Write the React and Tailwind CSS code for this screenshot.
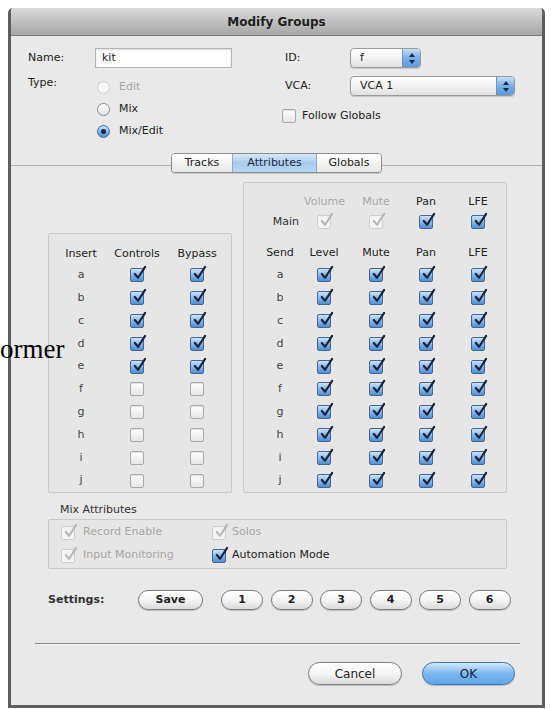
const FONT = { fontFamily: '"DejaVu Sans", "Liberation Sans", sans-serif' };

const INSERTS = ["a", "b", "c", "d", "e", "f", "g", "h", "i", "j"];
const SEND_COLS = [
  "w-[40px] ml-[16px]",
  "w-[40px] ml-[4px]",
  "w-[40px] ml-[12px]",
  "w-[40px] ml-[10px]",
  "w-[40px] ml-[12px]",
];

function Tick({ color }) {
  return (
    <svg
      viewBox="0 0 16 16"
      className="absolute left-[1px] -top-[3px] w-[15px] h-[15px] overflow-visible"
    >
      <path
        d="M3 8.5 L6.5 12.5 L14 1"
        fill="none"
        stroke={color}
        strokeWidth="2.3"
        strokeLinecap="round"
        strokeLinejoin="round"
      />
    </svg>
  );
}

function Check({ on = true, dim = false }) {
  if (!on) {
    return (
      <span className="inline-block w-[14px] h-[14px] rounded-[2px] border border-[#ababab] bg-gradient-to-b from-[#ffffff] to-[#e6e6e6] shadow-[inset_0_1px_1px_rgba(0,0,0,0.12)]" />
    );
  }
  if (dim) {
    return (
      <span className="relative inline-block w-[14px] h-[14px] rounded-[2px] border border-[#cfcfcf] bg-[#f3f3f3]">
        <Tick color="#b9b9b9" />
      </span>
    );
  }
  return (
    <span className="relative inline-block w-[14px] h-[14px] rounded-[2px] border border-[#41679a] bg-gradient-to-b from-[#cde3f9] via-[#86b6e8] to-[#4f8fd2]">
      <Tick color="#16233d" />
    </span>
  );
}

function Radio({ on = false, dim = false }) {
  if (on) {
    return (
      <span className="flex items-center justify-center w-[13px] h-[13px] rounded-full border border-[#3f6c9f] bg-gradient-to-b from-[#cde3f9] via-[#86b6e8] to-[#4f8fd2]">
        <span className="w-[5px] h-[5px] rounded-full bg-[#1b2a45]" />
      </span>
    );
  }
  return (
    <span
      className={
        dim
          ? "w-[13px] h-[13px] rounded-full border border-[#cdcdcd] bg-[#f5f5f5]"
          : "w-[13px] h-[13px] rounded-full border border-[#8f8f8f] bg-gradient-to-b from-white to-[#e2e2e2]"
      }
    />
  );
}

function Popup({ label, width }) {
  return (
    <div
      className={`flex h-[20px] ${width} rounded-[4px] border border-[#9a9a9a] bg-gradient-to-b from-white via-[#f3f3f3] to-[#e0e0e0] shadow-[0_1px_1px_rgba(0,0,0,0.15)] overflow-hidden`}
    >
      <span className="flex-1 pl-[9px] leading-[18px] text-[#222]">{label}</span>
      <span className="flex flex-col items-center justify-center gap-[3px] w-[18px] bg-gradient-to-b from-[#c6def7] via-[#79aee6] to-[#5d9ade] border-l border-[#6d94c0]">
        <svg viewBox="0 0 6 4" className="w-[6px] h-[4px]">
          <path d="M0 4 L3 0 L6 4 Z" fill="#1c2c48" />
        </svg>
        <svg viewBox="0 0 6 4" className="w-[6px] h-[4px]">
          <path d="M0 0 L3 4 L6 0 Z" fill="#1c2c48" />
        </svg>
      </span>
    </div>
  );
}

function Pill({ children, className = "" }) {
  return (
    <button
      className={`flex items-center justify-center rounded-full border border-[#7f7f7f] bg-gradient-to-b from-white via-[#f5f5f5] to-[#dadada] shadow-[0_1px_1px_rgba(0,0,0,0.2)] text-[#222] ${className}`}
    >
      {children}
    </button>
  );
}

export default function App() {
  return (
    <div
      className="relative w-[551px] h-[709px] bg-white overflow-hidden text-[11px]"
      style={FONT}
    >
      <div className="ml-[8px] mt-[8px] w-[537px] h-[700px] flex flex-col rounded-t-[5px] border-x-[3px] border-b-[3px] border-[#5e5e5e] bg-[#e9e9e9] overflow-hidden">
        {/* title bar */}
        <div className="h-[28px] flex items-center justify-center bg-gradient-to-b from-[#dadada] to-[#a7a7a7] border-b border-[#7c7c7c] text-[12px] font-bold text-[#1f1f1f]">
          Modify Groups
        </div>

        {/* top fields */}
        <div className="h-[116px] flex pt-[12px]">
          <div className="w-[271px] pl-[17px]">
            <div className="flex items-center h-[20px]">
              <span className="w-[67px] text-[#222]">Name:</span>
              <div className="w-[137px] h-[20px] bg-white border border-[#b4b4b4] shadow-[inset_0_1px_2px_rgba(0,0,0,0.15)] pl-[6px] leading-[18px] text-[#222]">
                kit
              </div>
            </div>
            <div className="flex mt-[8px]">
              <span className="w-[67px] leading-[14px] text-[#222]">Type:</span>
              <div className="flex flex-col">
                <div className="flex items-center gap-[9px] h-[22px] ml-[2px]">
                  <Radio dim />
                  <span className="text-[#a5a5a5]">Edit</span>
                </div>
                <div className="flex items-center gap-[9px] h-[22px] ml-[2px]">
                  <Radio />
                  <span className="text-[#222]">Mix</span>
                </div>
                <div className="flex items-center gap-[9px] h-[22px] ml-[2px]">
                  <Radio on />
                  <span className="text-[#222]">Mix/Edit</span>
                </div>
              </div>
            </div>
          </div>
          <div className="flex-1">
            <div className="flex items-center h-[20px]">
              <span className="w-[68px] pl-[3px] text-[#222]">ID:</span>
              <Popup label="f" width="w-[71px]" />
            </div>
            <div className="flex items-center h-[20px] mt-[8px]">
              <span className="w-[68px] pl-[3px] text-[#222]">VCA:</span>
              <Popup label="VCA 1" width="w-[165px]" />
            </div>
            <div className="flex items-center gap-[6px] mt-[12px]">
              <Check on={false} />
              <span className="text-[#222]">Follow Globals</span>
            </div>
          </div>
        </div>

        {/* tab panel */}
        <div className="mt-[13px] border-t border-[#b3b3b3] flex flex-col">
          <div className="relative z-10 -mt-[13px] flex justify-center">
            <div className="flex h-[20px] rounded-[4px] border border-[#8c8c8c] overflow-hidden shadow-[0_1px_1px_rgba(0,0,0,0.15)]">
              <span className="w-[60px] flex items-center justify-center bg-gradient-to-b from-white to-[#e6e6e6] text-[#222]">
                Tracks
              </span>
              <span className="w-[85px] flex items-center justify-center border-x border-[#9aa8b8] bg-gradient-to-b from-[#d9e9f9] via-[#a9cbef] to-[#b9d6f3] text-[#1c2a40]">
                Attributes
              </span>
              <span className="w-[64px] flex items-center justify-center bg-gradient-to-b from-white to-[#e6e6e6] text-[#222]">
                Globals
              </span>
            </div>
          </div>

          {/* inserts and sends */}
          <div className="flex items-end gap-[11px] pl-[37px] mt-[9px]">
            <div className="w-[184px] h-[260px] border border-[#cbcbcb] rounded-[2px] bg-[#e6e6e6] pt-[10px]">
              <div className="grid grid-cols-[64px_48px_72px] h-[20px] items-center text-[#222]">
                <span className="text-center">Insert</span>
                <span className="text-center">Controls</span>
                <span className="text-center">Bypass</span>
              </div>
              {INSERTS.map((l, i) => (
                <div
                  key={l}
                  className="grid grid-cols-[64px_48px_72px] h-[22.8px] items-center"
                >
                  <span className="text-center text-[#444]">{l}</span>
                  <span className="flex justify-center">
                    <Check on={i < 5} />
                  </span>
                  <span className="flex justify-center">
                    <Check on={i < 5} />
                  </span>
                </div>
              ))}
            </div>

            <div className="w-[264px] h-[311px] border border-[#cbcbcb] rounded-[2px] bg-[#e6e6e6] pt-[9px]">
              <div className="flex h-[20px] items-center">
                <span className={SEND_COLS[0]} />
                <span className={`${SEND_COLS[1]} text-center text-[#a9a9a9]`}>Volume</span>
                <span className={`${SEND_COLS[2]} text-center text-[#a9a9a9]`}>Mute</span>
                <span className={`${SEND_COLS[3]} text-center text-[#222]`}>Pan</span>
                <span className={`${SEND_COLS[4]} text-center text-[#222]`}>LFE</span>
              </div>
              <div className="flex h-[20px] items-center">
                <span className={`${SEND_COLS[0]} text-right pr-[1px] text-[#333]`}>Main</span>
                <span className={`${SEND_COLS[1]} flex justify-center`}>
                  <Check dim />
                </span>
                <span className={`${SEND_COLS[2]} flex justify-center`}>
                  <Check dim />
                </span>
                <span className={`${SEND_COLS[3]} flex justify-center`}>
                  <Check />
                </span>
                <span className={`${SEND_COLS[4]} flex justify-center`}>
                  <Check />
                </span>
              </div>
              <div className="flex h-[22px] items-center mt-[10px] text-[#222]">
                <span className={`${SEND_COLS[0]} text-center`}>Send</span>
                <span className={`${SEND_COLS[1]} text-center`}>Level</span>
                <span className={`${SEND_COLS[2]} text-center`}>Mute</span>
                <span className={`${SEND_COLS[3]} text-center`}>Pan</span>
                <span className={`${SEND_COLS[4]} text-center`}>LFE</span>
              </div>
              {INSERTS.map((l) => (
                <div key={l} className="flex h-[22.8px] items-center">
                  <span className={`${SEND_COLS[0]} text-center text-[#444]`}>{l}</span>
                  <span className={`${SEND_COLS[1]} flex justify-center`}>
                    <Check />
                  </span>
                  <span className={`${SEND_COLS[2]} flex justify-center`}>
                    <Check />
                  </span>
                  <span className={`${SEND_COLS[3]} flex justify-center`}>
                    <Check />
                  </span>
                  <span className={`${SEND_COLS[4]} flex justify-center`}>
                    <Check />
                  </span>
                </div>
              ))}
            </div>
          </div>

          {/* mix attributes */}
          <div className="ml-[49px] mt-[10px] h-[14px] leading-[14px] text-[#333]">
            Mix Attributes
          </div>
          <div className="ml-[37px] mt-[2px] w-[459px] h-[50px] border border-[#cbcbcb] rounded-[2px] bg-[#e6e6e6] py-[1px] pl-[12px] grid grid-cols-[151px_1fr]">
            <div className="flex items-center gap-[8px] h-[23px]">
              <Check dim />
              <span className="text-[#a5a5a5]">Record Enable</span>
            </div>
            <div className="flex items-center gap-[6px] h-[23px]">
              <Check dim />
              <span className="text-[#a5a5a5]">Solos</span>
            </div>
            <div className="flex items-center gap-[8px] h-[23px]">
              <Check dim />
              <span className="text-[#a5a5a5]">Input Monitoring</span>
            </div>
            <div className="flex items-center gap-[6px] h-[23px]">
              <Check />
              <span className="text-[#222]">Automation Mode</span>
            </div>
          </div>

          {/* settings */}
          <div className="flex items-center ml-[37px] mt-[21px] h-[20px]">
            <span className="w-[90px] font-bold text-[#333]">Settings:</span>
            <Pill className="w-[65px] h-[20px] font-bold">Save</Pill>
            <div className="flex gap-[7.5px] ml-[18px]">
              {["1", "2", "3", "4", "5", "6"].map((n) => (
                <Pill key={n} className="w-[42px] h-[20px] font-bold">
                  {n}
                </Pill>
              ))}
            </div>
          </div>

          <div className="ml-[24px] mt-[33px] w-[485px] h-[2px] border-t border-[#8a8a8a] bg-[#f4f4f4]" />

          <div className="flex justify-end gap-[20px] pr-[27px] mt-[17px]">
            <Pill className="w-[94px] h-[23px] text-[12px]">Cancel</Pill>
            <button className="w-[93px] h-[23px] rounded-full border border-[#3e78b5] bg-gradient-to-b from-[#d3e8fc] via-[#7db6ee] to-[#5ea6ea] shadow-[0_1px_1px_rgba(0,0,0,0.2)] text-[12px] text-[#14243f]">
              OK
            </button>
          </div>
        </div>
      </div>

      {/* text from the page behind the dialog */}
      <span
        className="absolute left-0 top-[336px] leading-none text-[27px] text-black"
        style={{ fontFamily: '"Liberation Serif", "Times New Roman", serif' }}
      >
        ormer
      </span>
    </div>
  );
}
